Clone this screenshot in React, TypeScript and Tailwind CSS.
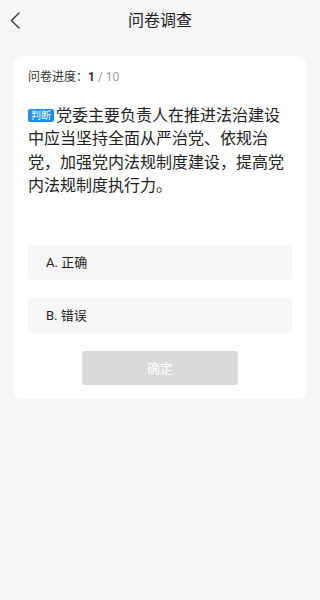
import React from "react";

export default function App() {
  return (
    <div
      className="min-h-[600px] bg-[#f6f6f6] text-[#333]"
      style={{ fontFamily: 'Roboto, "Noto Sans CJK SC", sans-serif' }}
    >
      <div className="grid h-[41px] grid-cols-[40px_1fr_40px] items-center">
        <div className="flex items-center pl-[10px]">
          <svg width="10" height="17" viewBox="0 0 10 17" fill="none">
            <path d="M9 1L1.5 8.5L9 16" stroke="#333" strokeWidth="1.4" strokeLinecap="round" strokeLinejoin="round" />
          </svg>
        </div>
        <div className="text-center text-[16px] leading-[22px] text-[#222]">问卷调查</div>
        <div />
      </div>

      <div className="mx-[14px] mt-[15px] rounded-[8px] bg-white px-[14px] pb-[14px] pt-[13px]">
        <div className="text-[12px] leading-[17px] text-[#333]">
          问卷进度：<span className="font-semibold text-[#222]">1</span>
          <span className="text-[#999]"> / 10</span>
        </div>

        <div className="mt-[18px] text-[16px] leading-[23.33px] text-[#222]">
          <span className="mr-[2px] inline-block h-[13px] rounded-[2px] bg-[#1e8ff2] px-[3px] align-[2px] text-[10px] leading-[13px] text-white">
            判断
          </span>
          党委主要负责人在推进法治建设中应当坚持全面从严治党、依规治党，加强党内法规制度建设，提高党内法规制度执行力。
        </div>

        <div className="mt-[48px] flex flex-col gap-[18px]">
          <div className="flex h-[35px] items-center rounded-[4px] bg-[#f7f7f7] px-[18px] text-[13px] text-[#222]">
            A. 正确
          </div>
          <div className="flex h-[35px] items-center rounded-[4px] bg-[#f7f7f7] px-[18px] text-[13px] text-[#222]">
            B. 错误
          </div>
        </div>

        <div className="mx-auto mt-[18px] flex h-[34px] w-[156px] items-center justify-center rounded-[3px] bg-[#d9d9d9] text-[13px] text-white">
          确定
        </div>
      </div>
    </div>
  );
}
